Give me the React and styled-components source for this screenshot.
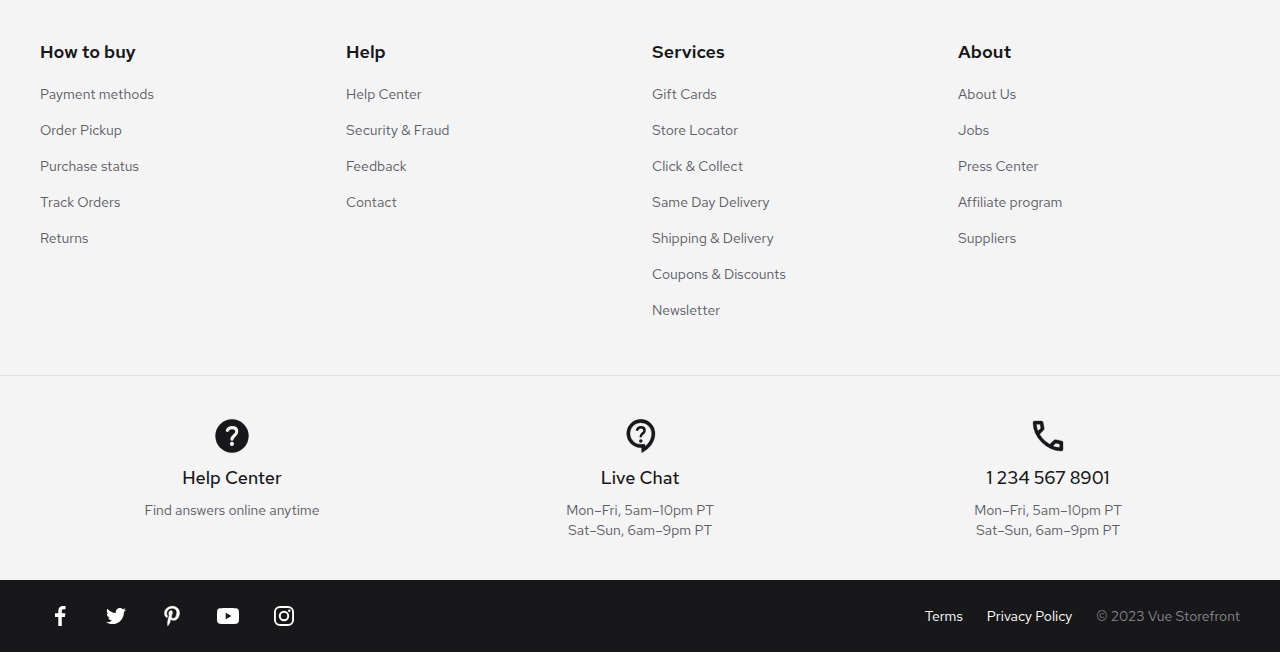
import React from 'react';
import styled, { createGlobalStyle } from 'styled-components';
import { FaPinterestP, FaTwitter } from 'react-icons/fa';

const GlobalStyle = createGlobalStyle`
  *, *::before, *::after { box-sizing: border-box; }
  body {
    margin: 0;
    background: #f4f4f4;
    color: #18181a;
    font-family: "Red Hat Text", Inter, sans-serif;
    font-size: 14px;
    line-height: 20px;
    -webkit-font-smoothing: antialiased;
  }
`;

const Footer = styled.footer`
  background: #f4f4f4;
`;

const LinkColumns = styled.nav`
  display: grid;
  grid-template-columns: repeat(4, 1fr);
  column-gap: 24px;
  padding: 38px 40px 47px;
`;

const ColumnTitle = styled.h2`
  margin: 0;
  font-size: 18px;
  line-height: 28px;
  font-weight: 580;
`;

const List = styled.ul`
  margin: 10px 0 0;
  padding: 0;
  list-style: none;
`;

const ListItem = styled.li`
  padding: 8px 0;
`;

const FooterLink = styled.a`
  color: #5c5c66;
  text-decoration: none;
  &:hover { text-decoration: underline; }
`;

const Contacts = styled.section`
  display: grid;
  grid-template-columns: repeat(3, 1fr);
  column-gap: 24px;
  padding: 40px;
  border-top: 1px solid #e1e1e3;
`;

const Contact = styled.div`
  display: flex;
  flex-direction: column;
  align-items: center;
  text-align: center;
  color: #5c5c66;
  svg { width: 40px; height: 40px; fill: #18181a; }
`;

const ContactTitle = styled.a`
  margin: 8px 0;
  color: #18181a;
  font-size: 18px;
  line-height: 28px;
  font-weight: 550;
  text-decoration: none;
`;

const Hours = styled.p`
  margin: 0;
`;

const BottomBar = styled.div`
  display: flex;
  align-items: center;
  justify-content: space-between;
  padding: 16px 40px;
  background: #18181a;
`;

const Group = styled.div`
  display: flex;
  align-items: center;
  gap: ${({ $gap }) => $gap}px;
`;

const SocialLink = styled.a`
  display: flex;
  padding: 8px;
  color: #fff;
  svg { width: 24px; height: 24px; fill: currentColor; }
`;

const LegalLink = styled.a`
  color: #fff;
  text-decoration: none;
`;

const Copyright = styled.span`
  color: #87878c;
`;

const HelpIcon = () => (
  <svg viewBox="0 0 24 24" aria-hidden="true">
    <circle cx="12" cy="12" r="10" />
    <path fill="none" stroke="#f4f4f4" strokeWidth="1.85" strokeLinecap="round" d="M9.200 8.600C9.700 7.500 10.700 6.950 12 6.950c1.700 0 2.850.9 2.850 2.300 0 1-.5 1.650-1.400 2.450-.9.800-1.400 1.350-1.500 2.250" />
    <circle cx="11.950" cy="16.750" r="1.250" fill="#f4f4f4" />
  </svg>
);

const ContactSupportIcon = () => (
  <svg viewBox="0 0 24 24" aria-hidden="true">
    <path fillRule="evenodd" stroke="#18181a" strokeWidth="0.200" d="M13 22v-3h-.5a8.5 8.5 0 1 1 8.5-8.5c0 4.9-3.2 9.1-8 11.5Zm2-3.650c2.500-2.100 4-4.800 4-7.850A6.500 6.500 0 1 0 12.500 17H15v1.350Z" />
    <path fill="none" stroke="#18181a" strokeWidth="1.500" strokeLinecap="round" d="M10.300 8.200C10.700 7.300 11.500 6.800 12.500 6.800c1.300 0 2.250.75 2.250 1.850 0 .75-.45 1.250-1.150 1.850-.75.65-1.100 1.050-1.150 1.700" />
    <circle cx="12.500" cy="15" r="1.050" />
  </svg>
);

const CallIcon = () => (
  <svg viewBox="0 0 24 24" aria-hidden="true">
    <path fillRule="evenodd" stroke="#18181a" strokeWidth="0.200" d="M19.950 21q-3.125 0-6.175-1.363-3.050-1.362-5.550-3.862-2.500-2.500-3.862-5.550Q3 7.175 3 4.050q0-.450.300-.750t.750-.300H8.100q.350 0 .625.238.275.237.325.562l.650 3.500q.050.400-.025.675-.075.275-.275.475L6.975 10.900q.500.925 1.187 1.787.688.863 1.513 1.663.775.775 1.625 1.438.850.662 1.800 1.212l2.350-2.350q.225-.225.588-.338.362-.112.712-.062l3.450.700q.350.100.575.362.225.263.225.588v4.050q0 .450-.300.750t-.750.300ZM6.025 9l1.650-1.650L7.250 5H5.025q.125 1.025.350 2.025.225 1 .650 1.975Zm8.950 8.950q.975.425 1.988.675 1.012.250 2.037.325v-2.200l-2.350-.475Z" />
  </svg>
);

const FacebookIcon = () => (
  <svg viewBox="0 0 24 24" aria-hidden="true">
    <path d="M13.8 22v-9.1h3.1l.5-3.6h-3.6V7c0-1 .3-1.7 1.8-1.7h1.9V2.1C17.2 2 16.1 2 15 2c-2.8 0-4.7 1.7-4.7 4.7v2.6H7v3.6h3.3V22h3.5Z" />
  </svg>
);

const TwitterIcon = () => (
  <svg viewBox="0 0 24 24" aria-hidden="true"><FaTwitter x="2" y="2" style={{ width: 20, height: 20 }} /></svg>
);

const PinterestIcon = () => (
  <svg viewBox="0 0 24 24" aria-hidden="true"><FaPinterestP x="2" y="2" stroke="currentColor" strokeWidth="12" style={{ width: 20, height: 20, strokeWidth: 12, overflow: 'visible' }} /></svg>
);

const YoutubeIcon = () => (
  <svg viewBox="0 0 24 24" aria-hidden="true">
    <path fillRule="evenodd" d="M4 4.300c4-.4 12-.4 16 0 2 .2 2.800 1.300 2.900 3.200.2 3 .2 6 0 9-.1 1.900-.9 3-2.900 3.200-4 .4-12 .4-16 0-2-.2-2.800-1.300-2.900-3.200-.2-3-.2-6 0-9C1.200 5.600 2 4.500 4 4.300ZM9.700 8.700v6.600l5.800-3.300-5.800-3.300Z" />
  </svg>
);

const InstagramIcon = () => (
  <svg viewBox="0 0 24 24" aria-hidden="true">
    <path fillRule="evenodd" d="M8 2h8a6 6 0 0 1 6 6v8a6 6 0 0 1-6 6H8a6 6 0 0 1-6-6V8a6 6 0 0 1 6-6Zm0 1.900A4.100 4.100 0 0 0 3.900 8v8A4.100 4.100 0 0 0 8 20.100h8a4.100 4.100 0 0 0 4.100-4.100V8A4.100 4.100 0 0 0 16 3.900H8Zm4 2.900a5.200 5.200 0 1 1 0 10.400 5.200 5.200 0 0 1 0-10.400Zm0 1.950a3.250 3.250 0 1 0 0 6.500 3.250 3.250 0 0 0 0-6.500Zm5.300-3.250a1.200 1.200 0 1 1 0 2.400 1.200 1.200 0 0 1 0-2.400Z" />
  </svg>
);

const columns = [
  { title: 'How to buy', links: ['Payment methods', 'Order Pickup', 'Purchase status', 'Track Orders', 'Returns'] },
  { title: 'Help', links: ['Help Center', 'Security & Fraud', 'Feedback', 'Contact'] },
  { title: 'Services', links: ['Gift Cards', 'Store Locator', 'Click & Collect', 'Same Day Delivery', 'Shipping & Delivery', 'Coupons & Discounts', 'Newsletter'] },
  { title: 'About', links: ['About Us', 'Jobs', 'Press Center', 'Affiliate program', 'Suppliers'] },
];

const hours = ['Mon–Fri, 5am–10pm PT', 'Sat–Sun, 6am–9pm PT'];

const contacts = [
  { title: 'Help Center', Icon: HelpIcon, lines: ['Find answers online anytime'] },
  { title: 'Live Chat', Icon: ContactSupportIcon, lines: hours },
  { title: '1 234 567 8901', Icon: CallIcon, lines: hours },
];

const socials = [
  { label: 'Facebook', Icon: FacebookIcon },
  { label: 'Twitter', Icon: TwitterIcon },
  { label: 'Pinterest', Icon: PinterestIcon },
  { label: 'Youtube', Icon: YoutubeIcon },
  { label: 'Instagram', Icon: InstagramIcon },
];

export default function App() {
  return (
    <>
      <GlobalStyle />
      <Footer>
        <LinkColumns>
          {columns.map(({ title, links }) => (
            <div key={title}>
              <ColumnTitle>{title}</ColumnTitle>
              <List>
                {links.map((link) => (
                  <ListItem key={link}><FooterLink href="#">{link}</FooterLink></ListItem>
                ))}
              </List>
            </div>
          ))}
        </LinkColumns>
        <Contacts>
          {contacts.map(({ title, Icon, lines }) => (
            <Contact key={title}>
              <Icon />
              <ContactTitle href="#">{title}</ContactTitle>
              {lines.map((line) => <Hours key={line}>{line}</Hours>)}
            </Contact>
          ))}
        </Contacts>
        <BottomBar>
          <Group $gap={16}>
            {socials.map(({ label, Icon }) => (
              <SocialLink key={label} href="#" aria-label={label}><Icon /></SocialLink>
            ))}
          </Group>
          <Group $gap={24}>
            <LegalLink href="#">Terms</LegalLink>
            <LegalLink href="#">Privacy Policy</LegalLink>
            <Copyright>© 2023 Vue Storefront</Copyright>
          </Group>
        </BottomBar>
      </Footer>
    </>
  );
}
